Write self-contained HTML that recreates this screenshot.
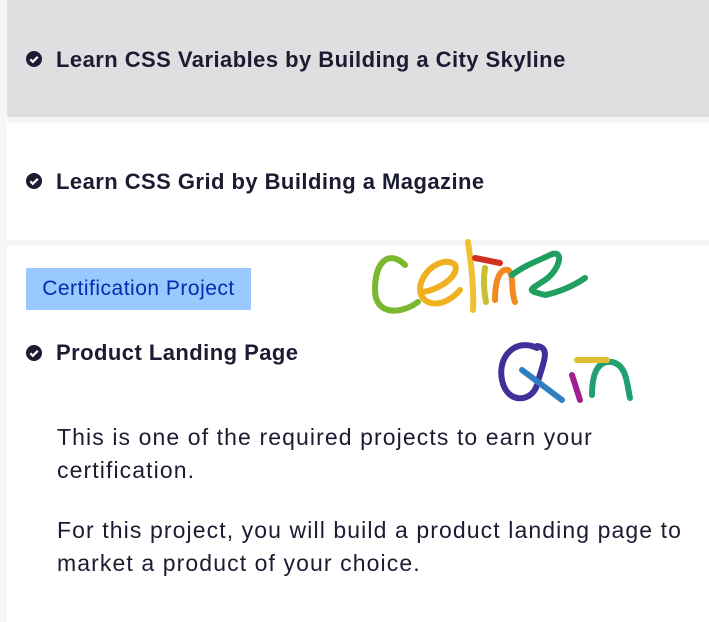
<!DOCTYPE html>
<html><head><style>
body{margin:0;width:709px;height:622px;background:#f5f6f7;overflow:hidden;font-family:"Liberation Sans",sans-serif;color:#1b1b32;position:relative}
.box{position:absolute;left:7px;right:0}
.t{position:absolute;left:56px;font-weight:bold;font-size:22px;letter-spacing:0.45px;white-space:nowrap}
.ic{position:absolute;left:26px;width:16px;height:16px}
p{position:absolute;left:57px;margin:0;font-size:23px;line-height:33px;width:640px;letter-spacing:1.1px}
</style></head><body>
<div class="box" style="top:0;height:117px;background:#dfdfe2"></div>
<div class="box" style="top:123px;height:117px;background:#fff"></div>
<div class="box" style="top:246px;height:376px;background:#fff"></div>
<svg class="ic" style="top:51px" viewBox="0 0 16 16"><circle cx="8" cy="8" r="8" fill="#1b1b32"/><path d="M4.3 8.3l2.5 2.5 5-5" stroke="#fff" stroke-width="2.2" fill="none"/></svg>
<div class="t" style="top:47px">Learn CSS Variables by Building a City Skyline</div>
<svg class="ic" style="top:173px" viewBox="0 0 16 16"><circle cx="8" cy="8" r="8" fill="#1b1b32"/><path d="M4.3 8.3l2.5 2.5 5-5" stroke="#fff" stroke-width="2.2" fill="none"/></svg>
<div class="t" style="top:169px">Learn CSS Grid by Building a Magazine</div>
<div style="position:absolute;left:26px;top:268px;width:225px;height:42px;background:#99c9ff;color:#002ead;font-size:21px;letter-spacing:0.5px;line-height:42px;text-align:center;white-space:nowrap">Certification Project</div>
<svg class="ic" style="top:345px" viewBox="0 0 16 16"><circle cx="8" cy="8" r="8" fill="#1b1b32"/><path d="M4.3 8.3l2.5 2.5 5-5" stroke="#fff" stroke-width="2.2" fill="none"/></svg>
<div class="t" style="top:340px">Product Landing Page</div>
<p style="top:421px">This is one of the required projects to earn your certification.</p>
<p style="top:514px">For this project, you will build a product landing page to market a product of your choice.</p>
<svg style="position:absolute;left:360px;top:230px" width="280" height="180" viewBox="0 0 280 180" fill="none" stroke-width="6" stroke-linecap="round">
<path d="M45 35C30 20 15 30 15 60 15 85 40 85 58 72" stroke="#7cb82f"/>
<path d="M62 62C80 60 100 45 95 35 85 25 60 40 60 60 62 78 85 78 100 60" stroke="#f0b020"/>
<path d="M108 12C112 40 114 60 113 80" stroke="#f0c030"/>
<path d="M125 38C123 50 124 62 126 72" stroke="#c8c030"/>
<path d="M115 28l25 5" stroke="#d03020"/>
<path d="M135 70C135 50 140 38 148 40 155 45 150 60 155 72" stroke="#f08a20"/>
<path d="M152 45C165 35 180 30 190 25 205 18 200 40 185 50 170 60 165 60 185 65 200 62 215 55 225 48" stroke="#20a060"/>
<g transform="translate(57,0)">
<path d="M120 118C100 108 80 125 85 150 90 175 115 172 120 155 125 135 135 118 120 116" stroke="#40309a"/>
<path d="M105 140l40 30" stroke="#3080c0"/>
<path d="M155 145l8 25" stroke="#a02090"/>
<path d="M175 165C175 145 180 130 195 132 210 135 210 155 213 168" stroke="#20a070"/>
<path d="M160 130l30 0" stroke="#e0c030"/>
</g>
</svg>
</body></html>
